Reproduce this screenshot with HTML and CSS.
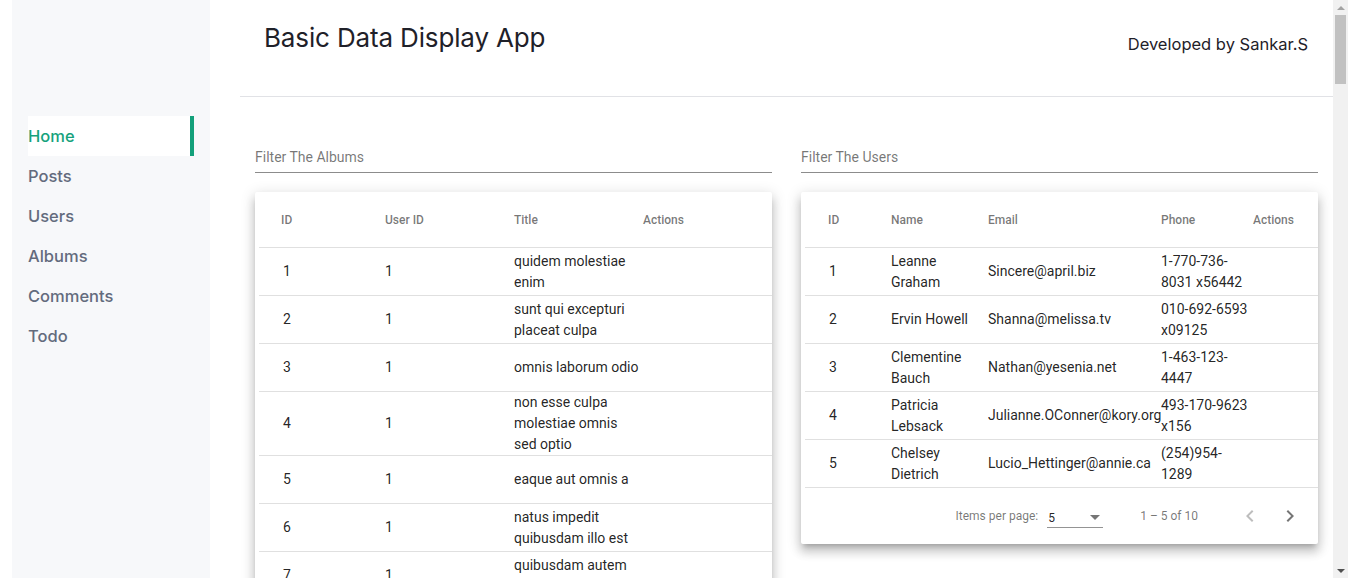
FILE: index.html
```html
<!DOCTYPE html>
<html lang="en">
<head>
<meta charset="utf-8">
<title>Basic Data Display App</title>
<link rel="stylesheet" href="styles.css">
</head>
<body>
<div class="app">
  <aside class="sidebar">
    <nav class="nav">
      <a class="nav-item active">Home</a>
      <a class="nav-item">Posts</a>
      <a class="nav-item">Users</a>
      <a class="nav-item">Albums</a>
      <a class="nav-item">Comments</a>
      <a class="nav-item">Todo</a>
    </nav>
  </aside>
  <main class="main">
    <div class="page">
      <header class="topbar">
        <h1 class="title">Basic Data Display App</h1>
        <span class="credit">Developed by Sankar.S</span>
      </header>
      <section class="content">
        <div class="panel">
          <div class="filter"><span class="filter-label">Filter The Albums</span></div>
          <div class="card">
            <table class="data-table albums">
              <colgroup><col class="a-id"><col class="a-user"><col class="a-title"><col class="a-actions"></colgroup>
              <thead><tr><th>ID</th><th>User ID</th><th>Title</th><th>Actions</th></tr></thead>
              <tbody>
                <tr><td>1</td><td>1</td><td>quidem molestiae enim</td><td></td></tr>
                <tr><td>2</td><td>1</td><td>sunt qui excepturi placeat culpa</td><td></td></tr>
                <tr><td>3</td><td>1</td><td>omnis laborum odio</td><td></td></tr>
                <tr><td>4</td><td>1</td><td>non esse culpa molestiae omnis sed optio</td><td></td></tr>
                <tr><td>5</td><td>1</td><td>eaque aut omnis a</td><td></td></tr>
                <tr><td>6</td><td>1</td><td>natus impedit quibusdam illo est</td><td></td></tr>
                <tr><td>7</td><td>1</td><td>quibusdam autem aliquid et et quia</td><td></td></tr>
                <tr><td>8</td><td>1</td><td>qui fuga est a eum</td><td></td></tr>
                <tr><td>9</td><td>1</td><td>saepe unde necessitatibus rem</td><td></td></tr>
                <tr><td>10</td><td>1</td><td>distinctio laborum qui</td><td></td></tr>
              </tbody>
            </table>
          </div>
        </div>
        <div class="panel">
          <div class="filter"><span class="filter-label">Filter The Users</span></div>
          <div class="card">
            <table class="data-table users">
              <colgroup><col class="u-id"><col class="u-name"><col class="u-email"><col class="u-phone"><col class="u-actions"></colgroup>
              <thead><tr><th>ID</th><th>Name</th><th>Email</th><th>Phone</th><th>Actions</th></tr></thead>
              <tbody>
                <tr><td>1</td><td>Leanne Graham</td><td>Sincere@april.biz</td><td>1-770-736-8031 x56442</td><td></td></tr>
                <tr><td>2</td><td>Ervin Howell</td><td>Shanna@melissa.tv</td><td>010-692-6593 x09125</td><td></td></tr>
                <tr><td>3</td><td>Clementine Bauch</td><td>Nathan@yesenia.net</td><td>1-463-123-4447</td><td></td></tr>
                <tr><td>4</td><td>Patricia Lebsack</td><td>Julianne.OConner@kory.org</td><td>493-170-9623 x156</td><td></td></tr>
                <tr><td>5</td><td>Chelsey Dietrich</td><td>Lucio_Hettinger@annie.ca</td><td>(254)954-1289</td><td></td></tr>
              </tbody>
            </table>
            <div class="paginator">
              <span class="pg-label">Items per page:</span>
              <div class="pg-select">
                <span class="pg-value">5</span>
                <span class="pg-arrow"></span>
              </div>
              <span class="pg-range">1 – 5 of 10</span>
              <button class="pg-btn disabled" aria-label="Previous page">
                <svg viewBox="0 0 24 24" width="24" height="24"><path d="M15.41 7.41L14 6l-6 6 6 6 1.41-1.41L10.83 12z"/></svg>
              </button>
              <button class="pg-btn" aria-label="Next page">
                <svg viewBox="0 0 24 24" width="24" height="24"><path d="M10 6L8.59 7.41 13.17 12l-4.58 4.59L10 18l6-6z"/></svg>
              </button>
            </div>
          </div>
        </div>
      </section>
    </div>
  </main>
  <div class="scrollbar" aria-hidden="true">
    <span class="sb-arrow up"></span>
    <div class="sb-track"><span class="sb-thumb"></span></div>
    <span class="sb-arrow down"></span>
  </div>
</div>
</body>
</html>
```

FILE: styles.css
```css
* { box-sizing: border-box; }

html, body {
  margin: 0;
  height: 100%;
  background: #ffffff;
}

body {
  font-family: "Inter", "Noto Sans", sans-serif;
  overflow: hidden;
}

.app {
  display: flex;
  height: 100vh;
  padding: 0 15px 0 12px;
}

/* Sidebar */
.sidebar {
  width: 198px;
  flex: none;
  background: #f7f8fa;
  padding: 116px 16px 0 16px;
}

.nav {
  display: flex;
  flex-direction: column;
}

.nav-item {
  display: flex;
  align-items: center;
  height: 40px;
  padding-bottom: 1px;
  font-size: 16.5px;
  font-weight: 500;
  color: #636b7d;
  border-right: 4px solid transparent;
  text-decoration: none;
  cursor: pointer;
}

.nav-item.active {
  background: #ffffff;
  color: #15a27c;
  border-right-color: #13a07a;
}

/* Main */
.main {
  flex: 1;
  min-width: 0;
  height: 100vh;
  overflow-y: auto;
  scrollbar-width: none;
  padding-left: 30px;
}

.main::-webkit-scrollbar { display: none; }

.topbar {
  display: flex;
  justify-content: space-between;
  align-items: flex-start;
  height: 97px;
  padding: 0 25px 0 24px;
  border-bottom: 1px solid #e1e2e6;
}

.title {
  margin: 22px 0 0 0;
  font-size: 26px;
  font-weight: 400;
  line-height: 32px;
  color: #1f2129;
  letter-spacing: -0.15px;
}

.credit {
  margin-top: 34px;
  font-size: 16.5px;
  line-height: 20px;
  color: #1f2129;
}

.content {
  display: grid;
  grid-template-columns: 517px 517px;
  column-gap: 29px;
  padding: 51px 15px 40px 15px;
  align-items: start;
}

.filter {
  height: 25px;
  border-bottom: 1px solid rgba(0, 0, 0, 0.45);
  font-family: "Roboto", sans-serif;
  margin-bottom: 19px;
}

.filter-label {
  display: block;
  font-size: 14px;
  line-height: 18px;
  color: rgba(0, 0, 0, 0.55);
}

.card {
  background: #ffffff;
  padding-left: 4px;
  border-radius: 2px;
  box-shadow: 0 5px 5px -3px rgba(0, 0, 0, 0.2), 0 8px 10px 1px rgba(0, 0, 0, 0.14), 0 3px 14px 2px rgba(0, 0, 0, 0.12);
}

.data-table {
  width: 100%;
  table-layout: fixed;
  border-collapse: separate;
  border-spacing: 0;
  font-family: "Roboto", sans-serif;
}

.data-table th,
.data-table td {
  text-align: left;
  vertical-align: middle;
  padding: 0 4px 0 0;
  border-bottom: 1px solid rgba(0, 0, 0, 0.12);
}

.data-table th {
  height: 56px;
  padding-top: 1px;
  font-size: 12px;
  font-weight: 500;
  color: rgba(0, 0, 0, 0.54);
}

.data-table td {
  height: 48px;
  font-size: 14px;
  line-height: 21px;
  color: rgba(0, 0, 0, 0.87);
}

.albums th:first-child { padding-left: 22px; }
.albums td:first-child { padding-left: 24px; }

.users th:first-child { padding-left: 23px; }
.users td:first-child { padding-left: 24px; }

.users td { padding-right: 0; }

.a-id { width: 126px; }
.a-user { width: 129px; }
.a-title { width: 129px; }
.a-actions { width: auto; }

.u-id { width: 86px; }
.u-name { width: 97px; }
.u-email { width: 173px; }
.u-phone { width: 92px; }
.u-actions { width: auto; }

/* Paginator */
.paginator {
  display: flex;
  justify-content: flex-end;
  align-items: center;
  height: 56px;
  padding-right: 8px;
  font-family: "Roboto", sans-serif;
  font-size: 12px;
  color: rgba(0, 0, 0, 0.54);
}

.pg-label {
  margin: 0 4px;
}

.pg-select {
  display: flex;
  align-items: center;
  justify-content: space-between;
  width: 56px;
  height: 18px;
  margin: 6px 3px 0 5px;
  border-bottom: 1px solid rgba(0, 0, 0, 0.42);
  padding: 0 3px 2px 1px;
}

.pg-value {
  color: rgba(0, 0, 0, 0.87);
  font-size: 12px;
}

.pg-arrow {
  width: 0;
  height: 0;
  border-left: 5px solid transparent;
  border-right: 5px solid transparent;
  border-top: 5px solid rgba(0, 0, 0, 0.54);
}

.pg-range {
  margin: 0 32px 0 34px;
}

.pg-btn {
  width: 40px;
  height: 40px;
  padding: 0;
  border: 0;
  background: transparent;
  display: flex;
  align-items: center;
  justify-content: center;
  fill: rgba(0, 0, 0, 0.54);
}

.pg-btn.disabled {
  fill: rgba(0, 0, 0, 0.26);
}

/* Scrollbar of the content pane */
.scrollbar {
  width: 15px;
  flex: none;
  display: flex;
  flex-direction: column;
  background: #f1f1f1;
}

.sb-arrow {
  height: 15px;
  display: flex;
  align-items: center;
  justify-content: center;
}

.sb-arrow::before {
  content: "";
  width: 0;
  height: 0;
  border-left: 4px solid transparent;
  border-right: 4px solid transparent;
}

.sb-arrow.up::before { border-bottom: 4px solid #a3a3a3; }
.sb-arrow.down::before { border-top: 4px solid #505050; }

.sb-track {
  flex: 1;
  padding: 0 2px;
}

.sb-thumb {
  display: block;
  height: 69px;
  background: #c1c1c1;
}
```
